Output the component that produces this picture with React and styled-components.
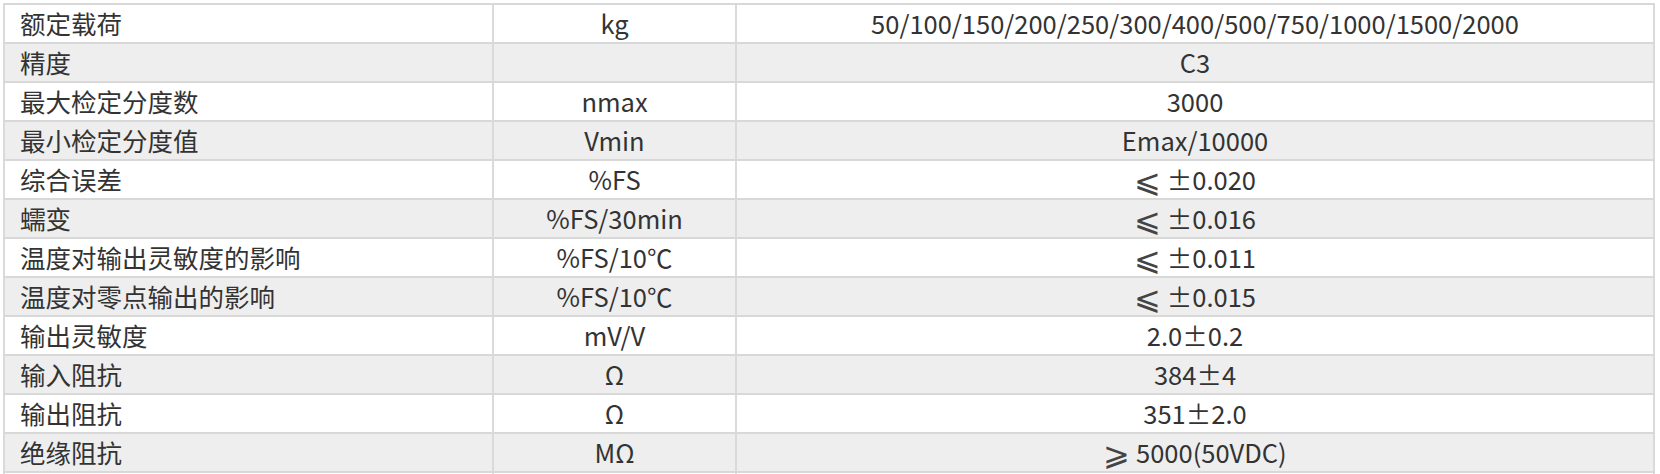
import React from "react";
import styled, { createGlobalStyle } from "styled-components";

const GlobalStyle = createGlobalStyle`
  html, body {
    margin: 0;
    padding: 0;
    background: #fff;
  }
  body {
    font-family: "Noto Sans CJK SC", "Noto Sans", sans-serif;
    color: #333;
  }
`;

const specs = [
  ["额定载荷", "kg", "50/100/150/200/250/300/400/500/750/1000/1500/2000"],
  ["精度", "", "C3"],
  ["最大检定分度数", "nmax", "3000"],
  ["最小检定分度值", "Vmin", "Emax/10000"],
  ["综合误差", "%FS", "⩽ ±0.020"],
  ["蠕变", "%FS/30min", "⩽ ±0.016"],
  ["温度对输出灵敏度的影响", "%FS/10℃", "⩽ ±0.011"],
  ["温度对零点输出的影响", "%FS/10℃", "⩽ ±0.015"],
  ["输出灵敏度", "mV/V", "2.0±0.2"],
  ["输入阻抗", "Ω", "384±4"],
  ["输出阻抗", "Ω", "351±2.0"],
  ["绝缘阻抗", "MΩ", "⩾ 5000(50VDC)"],
];

const Value = ({ text }) => {
  const first = text[0];
  if (first === "⩽" || first === "⩾") {
    return (
      <>
        <Relation>{first}</Relation>
        {text.slice(1)}
      </>
    );
  }
  return text;
};

const App = () => {
  return (
    <Wrapper>
      <GlobalStyle />
      <SpecTable>
        <colgroup>
          <col style={{ width: 489 }} />
          <col style={{ width: 243 }} />
          <col />
        </colgroup>
        <tbody>
          {specs.map(([name, unit, value], i) => (
            <Row key={name} $striped={i % 2 === 1}>
              <NameCell>{name}</NameCell>
              <Cell>{unit}</Cell>
              <Cell>
                <Value text={value} />
              </Cell>
            </Row>
          ))}
          <Row $striped={false}>
            <NameCell />
            <Cell />
            <Cell />
          </Row>
        </tbody>
      </SpecTable>
    </Wrapper>
  );
};

const Wrapper = styled.section`
  padding: 3px 5px 0 3px;
  height: 474px;
  box-sizing: border-box;
  overflow: hidden;
`;

const SpecTable = styled.table`
  width: 100%;
  table-layout: fixed;
  border-collapse: collapse;
  border-left: 2px solid #dadada;
  border-right: 2px solid #dadada;
`;

const Row = styled.tr`
  background: ${({ $striped }) => ($striped ? "#edeeed" : "#fff")};
`;

const Cell = styled.td`
  height: 37px;
  padding: 0 8px 2px;
  box-sizing: border-box;
  border-top: 2px solid #d8d8d8;
  border-left: 2px solid #dadada;
  text-align: center;
  font-size: 25.5px;
  line-height: 35px;
  white-space: nowrap;
  color: #333;
`;

const NameCell = styled(Cell)`
  text-align: left;
  padding-left: 15px;
  border-left: none;
`;

const Relation = styled.span`
  display: inline-block;
  font-size: 32px;
  line-height: 35px;
  height: 35px;
  vertical-align: top;
  color: #444;
`;

export default App;
